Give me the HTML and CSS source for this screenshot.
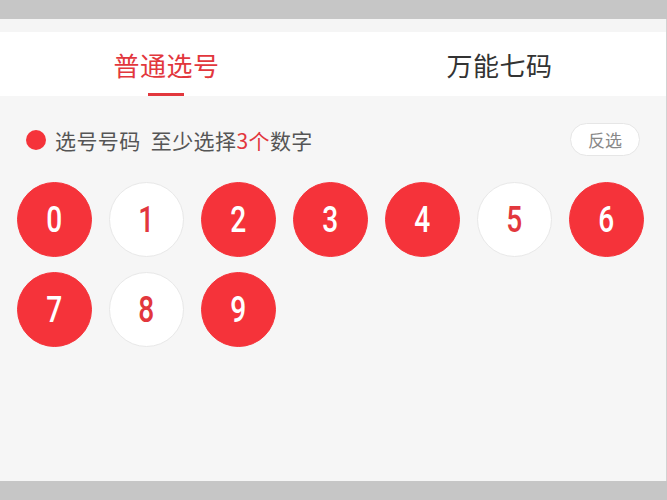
FILE: index.html
```html
<!DOCTYPE html>
<html lang="zh">
<head>
<meta charset="utf-8">
<link rel="stylesheet" href="styles.css">
</head>
<body>
<div class="topbar"></div>
<div class="app">
  <div class="band"></div>
  <div class="tabs">
    <div class="tab active"><span class="tab-label">普通选号</span><span class="indicator"></span></div>
    <div class="tab"><span class="tab-label">万能七码</span></div>
  </div>
  <div class="content">
    <div class="head">
      <div class="title"><span class="dot"></span><span>选号号码&nbsp; 至少选择<em class="hl">3个</em>数字</span></div>
      <button class="invert">反选</button>
    </div>
    <div class="balls">
      <div class="ball on"><span class="num">0</span></div>
      <div class="ball"><span class="num">1</span></div>
      <div class="ball on"><span class="num">2</span></div>
      <div class="ball on"><span class="num">3</span></div>
      <div class="ball on"><span class="num">4</span></div>
      <div class="ball"><span class="num">5</span></div>
      <div class="ball on"><span class="num">6</span></div>
      <div class="ball on"><span class="num">7</span></div>
      <div class="ball"><span class="num">8</span></div>
      <div class="ball on"><span class="num">9</span></div>
    </div>
  </div>
</div>
<div class="bottombar"></div>
</body>
</html>
```
FILE: styles.css
```css
* { box-sizing: border-box; }
html, body { margin: 0; padding: 0; }
body {
  background: #c6c6c6;
  font-family: "Noto Sans CJK SC", "Noto Sans", sans-serif;
  width: 667px;
  height: 500px;
  overflow: hidden;
}
.topbar { height: 19px; background: #c6c6c6; }
.bottombar { height: 19px; background: #c6c6c6; }
.app {
  height: 462px;
  background: #f6f6f6;
  border-right: 1px solid #d2d2d2;
  display: flex;
  flex-direction: column;
}
.band { height: 13px; background: #f5f5f5; }
.tabs {
  height: 64px;
  background: #fff;
  display: flex;
}
.tab {
  flex: 1;
  position: relative;
  display: flex;
  align-items: center;
  justify-content: center;
  font-size: 26px;
  color: #333;
}
.tab-label { line-height: 1; margin-top: 2px; letter-spacing: 0.5px; }
.tab.active { color: #e2373d; }
.indicator {
  position: absolute;
  bottom: 0;
  left: 50%;
  width: 36px;
  height: 3px;
  margin-left: -19px;
  background: #e2373d;
}
.content { padding-top: 27px; }
.head {
  display: flex;
  align-items: center;
  justify-content: space-between;
  height: 33px;
  padding: 0 26px 0 26px;
}
.title {
  display: flex;
  align-items: center;
  font-size: 21px;
  letter-spacing: 0.4px;
  color: #555;
}
.dot {
  width: 20px;
  height: 20px;
  border-radius: 50%;
  background: #f5333a;
  margin-right: 9px;
}
.hl { font-style: normal; color: #e2373d; }
.invert {
  width: 70px;
  height: 33px;
  border-radius: 17px;
  border: 1px solid #e6e6e6;
  background: #fff;
  color: #888;
  font-family: "Noto Sans CJK SC", sans-serif;
  font-size: 17px;
  padding: 0;
}
.balls {
  display: flex;
  flex-wrap: wrap;
  gap: 15px 17px;
  padding-left: 17px;
  margin-top: 26px;
}
.ball {
  width: 75px;
  height: 75px;
  border-radius: 50%;
  background: #fff;
  border: 1px solid #e8e8e8;
  color: #e2373d;
  display: flex;
  align-items: center;
  justify-content: center;
  font-family: Roboto, "Liberation Sans", sans-serif;
  font-weight: 500;
  font-size: 36px;
}
.num { display: inline-block; transform: scaleX(0.78); }
.ball.on {
  background: #f5333a;
  border-color: #f5333a;
  color: #fff;
}
```
